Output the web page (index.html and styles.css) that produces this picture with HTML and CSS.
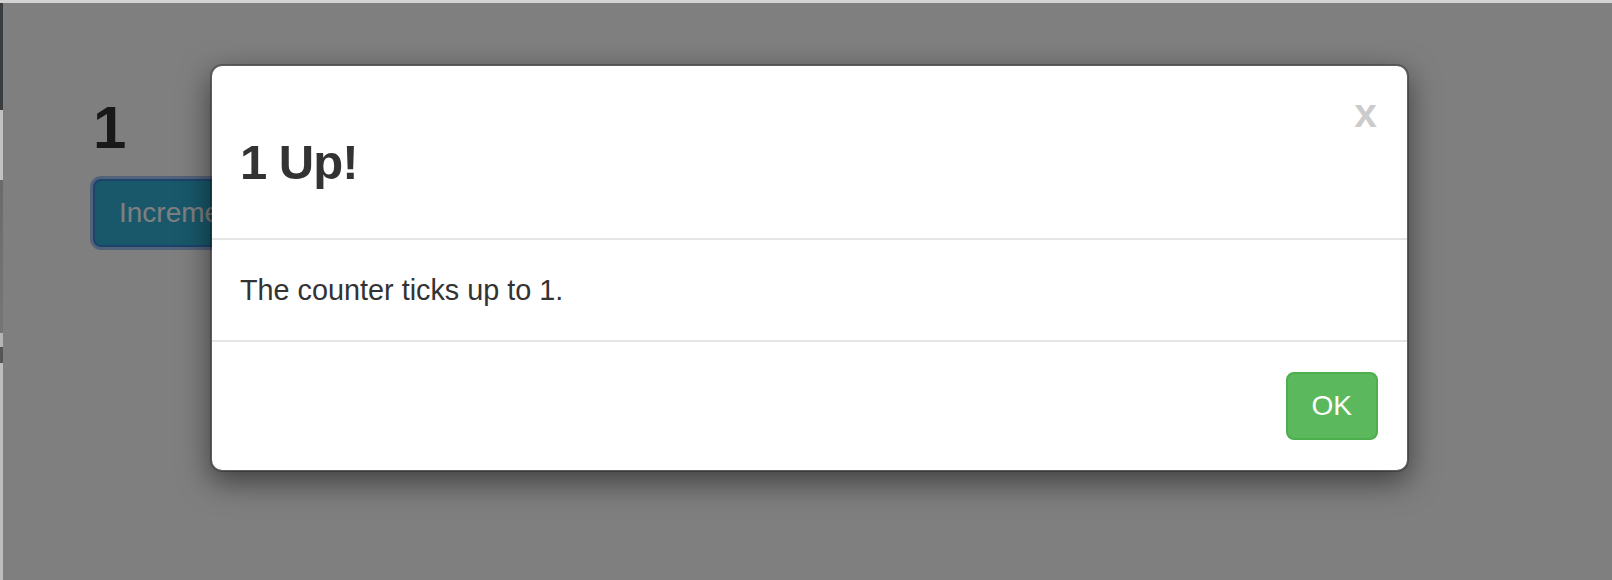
FILE: index.html
```html
<!DOCTYPE html>
<html>
<head>
<meta charset="utf-8">
<title>1 Up!</title>
<link rel="stylesheet" href="styles.css">
</head>
<body>
<div class="chrome-top"></div>
<div class="window">
  <div class="chrome-left"></div>
  <div class="viewport">
    <div class="container">
      <h2 class="counter">1</h2>
      <button class="btn btn-info focused" type="button">Increment</button>
    </div>
    <div class="backdrop"></div>
    <div class="modal">
      <div class="modal-header">
        <button class="close" type="button">x</button>
        <h3 class="modal-title">1 Up!</h3>
      </div>
      <div class="modal-body">The counter ticks up to 1.</div>
      <div class="modal-footer">
        <button class="btn btn-success" type="button">OK</button>
      </div>
    </div>
  </div>
</div>
</body>
</html>
```

FILE: styles.css
```css
* { box-sizing: border-box; }

html, body {
  margin: 0;
  padding: 0;
  width: 1612px;
  height: 580px;
  overflow: hidden;
  background: #ffffff;
  font-family: "Liberation Sans", Arial, Helvetica, sans-serif;
  color: #333333;
}

.chrome-top {
  height: 3px;
  background: #d4d4d4;
}

.window {
  display: flex;
  height: 577px;
}

.chrome-left {
  width: 3px;
  flex: none;
  background: linear-gradient(to bottom,
    #3a3d40 0px, #3a3d40 107px,
    #c2c2c2 107px, #c2c2c2 177px,
    #6a6a6a 177px, #767676 330px,
    #b4b4b4 330px, #b4b4b4 344px,
    #555555 344px, #555555 360px,
    #bdbdbd 360px, #bdbdbd 577px);
}

.viewport {
  position: relative;
  flex: 1;
  height: 577px;
  overflow: hidden;
  background: #ffffff;
}

.container {
  padding: 52px 0 0 90px;
}

.counter {
  margin: 40px 0 18px;
  font-size: 60px;
  line-height: 66px;
  font-weight: bold;
  color: #333333;
}

.btn {
  display: inline-block;
  font-family: "Liberation Sans", Arial, Helvetica, sans-serif;
  font-size: 28px;
  line-height: 40px;
  padding: 12px 24px;
  border: 2px solid transparent;
  border-radius: 8px;
  color: #ffffff;
  cursor: pointer;
}

.btn-info {
  background: #31b0d5;
  border-color: #3a86d8;
}

.btn-info.focused {
  box-shadow: 0 0 0 3px rgba(90, 150, 230, 0.55);
}

.btn-success {
  background: #5cb85c;
  border-color: #4cae4c;
}

.backdrop {
  position: absolute;
  inset: 0;
  background: rgba(0, 0, 0, 0.5);
}

.modal {
  position: absolute;
  left: 207px;
  top: 61px;
  width: 1199px;
  background: #ffffff;
  border: 2px solid rgba(0, 0, 0, 0.25);
  border-radius: 12px;
  background-clip: padding-box;
  box-shadow: 0 10px 30px rgba(0, 0, 0, 0.5);
}

.modal-header {
  padding: 30px 30px 30px 28px;
  border-bottom: 2px solid #e5e5e5;
}

.close {
  float: right;
  margin-top: -4px;
  padding: 0;
  border: 0;
  background: transparent;
  font-family: "Liberation Sans", Arial, Helvetica, sans-serif;
  font-size: 41px;
  line-height: 42px;
  font-weight: bold;
  color: #000000;
  opacity: 0.2;
  cursor: pointer;
}

.modal-title {
  margin: 40px 0 20px;
  font-size: 49px;
  line-height: 52px;
  font-weight: bold;
  letter-spacing: -1px;
  color: #333333;
}

.modal-body {
  padding: 30px 30px 30px 28px;
  font-size: 28.8px;
  line-height: 40px;
  color: #333333;
}

.modal-footer {
  padding: 30px 29px 30px 30px;
  border-top: 2px solid #e5e5e5;
  text-align: right;
}
```
